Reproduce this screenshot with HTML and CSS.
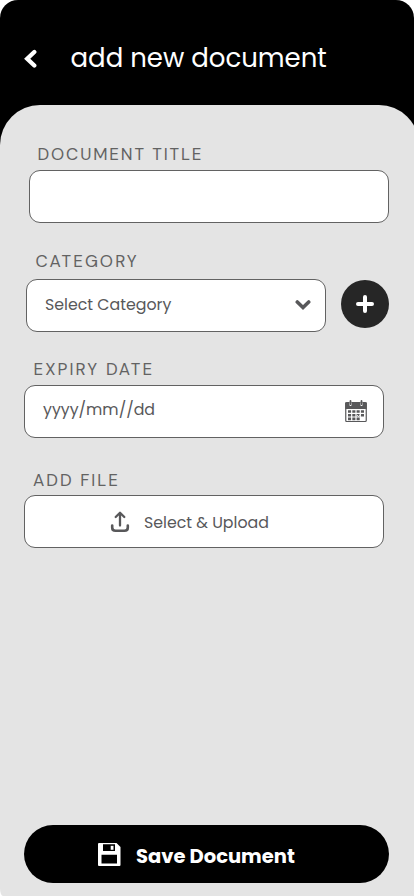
FILE: index.html
```html
<!DOCTYPE html>
<html lang="en">
<head>
<meta charset="utf-8">
<title>Add new document</title>
<link rel="stylesheet" href="styles.css">
</head>
<body>
<main class="screen">
  <header class="header">
    <svg class="back" width="14" height="20" viewBox="0 0 14 20"><path d="M11.300 3 4.200 9.700l7.100 6.800" fill="none" stroke="#fff" stroke-width="4.300" stroke-linecap="round" stroke-linejoin="miter"/></svg>
    <h1 class="title">add new document</h1>
  </header>
  <form class="panel">
    <section class="field field-title">
      <label class="label">DOCUMENT TITLE</label>
      <div class="box"></div>
    </section>
    <section class="field field-category">
      <label class="label">CATEGORY</label>
      <div class="row">
        <div class="box select">
          <span class="text">Select Category</span>
          <svg width="16" height="12" viewBox="0 0 16 12"><path d="M2.300 3 8 8.500l5.700-5.500" fill="none" stroke="#58585a" stroke-width="3.600" stroke-linecap="round"/></svg>
        </div>
        <div class="add"><svg width="18" height="18" viewBox="0 0 18 18"><path d="M9 2v14M2 9h14" stroke="#fff" stroke-width="4" stroke-linecap="round"/></svg></div>
      </div>
    </section>
    <section class="field field-date">
      <label class="label">EXPIRY DATE</label>
      <div class="box date">
        <span class="text">yyyy/mm//dd</span>
        <svg width="22" height="23" viewBox="0 0 22 23">
          <path d="M.75 3h20.500v17.500q0 1-1 1H1.750q-1 0-1-1z" fill="#fff" stroke="#58585a" stroke-width="1.200"/>
          <path d="M.2 3.500q0-1.500 1.500-1.500h18.600q1.500 0 1.500 1.500V9H.2z" fill="#58585a"/>
          <path d="M5.500 3v2M16.500 3v2" stroke="#fff" stroke-width="2.200" stroke-linecap="round"/>
          <path d="M5.500.9v3.300M16.500.9v3.300" stroke="#58585a" stroke-width="1.800" stroke-linecap="round"/>
          <path d="M3 11.500h16M3 15.200h16M3 18.900h12" stroke="#58585a" stroke-width="2.600" stroke-dasharray="3.100 1.200"/>
          <path d="m12 15 1.500 1.500 2.800-3.200" fill="none" stroke="#fff" stroke-width=".8"/>
        </svg>
      </div>
    </section>
    <section class="field field-file">
      <label class="label">ADD FILE</label>
      <div class="box upload">
        <svg width="20" height="22" viewBox="0 0 20 22"><path d="M10 14.500V2.500M5.700 6 10 1.700 14.300 6" fill="none" stroke="#58585a" stroke-width="2.300" stroke-linecap="round" stroke-linejoin="round"/><path d="M2.200 14.500v2q0 3.300 3.300 3.300h9q3.300 0 3.300-3.300v-2" fill="none" stroke="#58585a" stroke-width="2.600" stroke-linecap="round"/></svg>
        <span class="text">Select &amp; Upload</span>
      </div>
    </section>
    <div class="save">
      <svg width="23" height="23" viewBox="0 0 23 23"><path fill="#fff" fill-rule="evenodd" d="M1 0H18.500L22.500 4V22Q22.500 23 21.500 23H1Q0 23 0 22V1Q0 0 1 0ZM5 1.300V8H17V1.300ZM3.500 11.800V20.500H19V11.800Z"/><path fill="#fff" d="M12.700 2.800H15.500V6.800H12.700z"/></svg>
      <span>Save Document</span>
    </div>
  </form>
</main>
</body>
</html>
```
FILE: styles.css
```css
* { box-sizing: border-box; }
body { margin: 0; background: #fff; overflow: hidden; font-family: Poppins, Inter, "Liberation Sans", sans-serif; }
.screen { width: 414px; height: 896px; overflow: hidden; background: linear-gradient(#000 200px, #fff 200px); border-radius: 18px 18px 0 0; }
.header { height: 105px; display: flex; align-items: flex-start; padding: 38px 0 0 23px; }
.back { margin-top: 11px; }
.title { margin: 0 0 0 33.500px; font-size: 26px; font-weight: 400; line-height: 40px; color: #fff; white-space: nowrap; }
.panel { width: 419px; height: 791px; background: #e4e4e4; border-radius: 40px 40px 0 3px / 40px 40px 0 8px; display: flex; flex-direction: column; }
.label { display: block; height: 20px; padding-left: 9.500px; font-family: "DM Sans", Poppins, sans-serif; font-size: 17px; line-height: 20px; color: #626262; white-space: nowrap; letter-spacing: 2px; }
.box { width: 360px; height: 53px; background: #fff; border: 1px solid #626262; border-radius: 11px; display: flex; align-items: center; }
.text { font-size: 15.800px; line-height: 24px; color: #58585a; white-space: nowrap; }
.field-title { padding: 39px 0 0 29px; }
.field-title .label { padding-left: 8.500px; letter-spacing: 1.880px; }
.field-title .box { margin-top: 6px; }
.field-category { padding: 28px 0 0 26px; }
.field-category .label { letter-spacing: 2.100px; }
.row { display: flex; gap: 15px; margin-top: 8px; }
.select { width: 300px; padding: 0 14px 2px 18px; justify-content: space-between; }
.add { width: 48px; height: 48px; margin-top: 1px; border-radius: 50%; background: #262626; display: flex; align-items: center; justify-content: center; }
.field-date { padding: 27px 0 0 24px; }
.field-date .label { letter-spacing: 2.100px; }
.field-date .box { height: 53px; margin-top: 6px; padding: 0 16px 0 18px; justify-content: space-between; }
.date .text { margin-bottom: 4px; }
.field-file { padding: 32px 0 0 24px; }
.field-file .label { padding-left: 9px; }
.field-file .box { margin-top: 5px; padding: 1px 0 0 85px; gap: 14px; }
.upload .text { margin-top: 2px; }
.save { width: 365px; height: 58px; margin: auto 0 13px 24px; border-radius: 30px; background: #000; color: #fff; display: flex; align-items: center; gap: 15px; padding: 4px 0 0 74px; font-size: 19.500px; font-weight: 700; white-space: nowrap; }
.save svg { margin-top: -3px; }
```
